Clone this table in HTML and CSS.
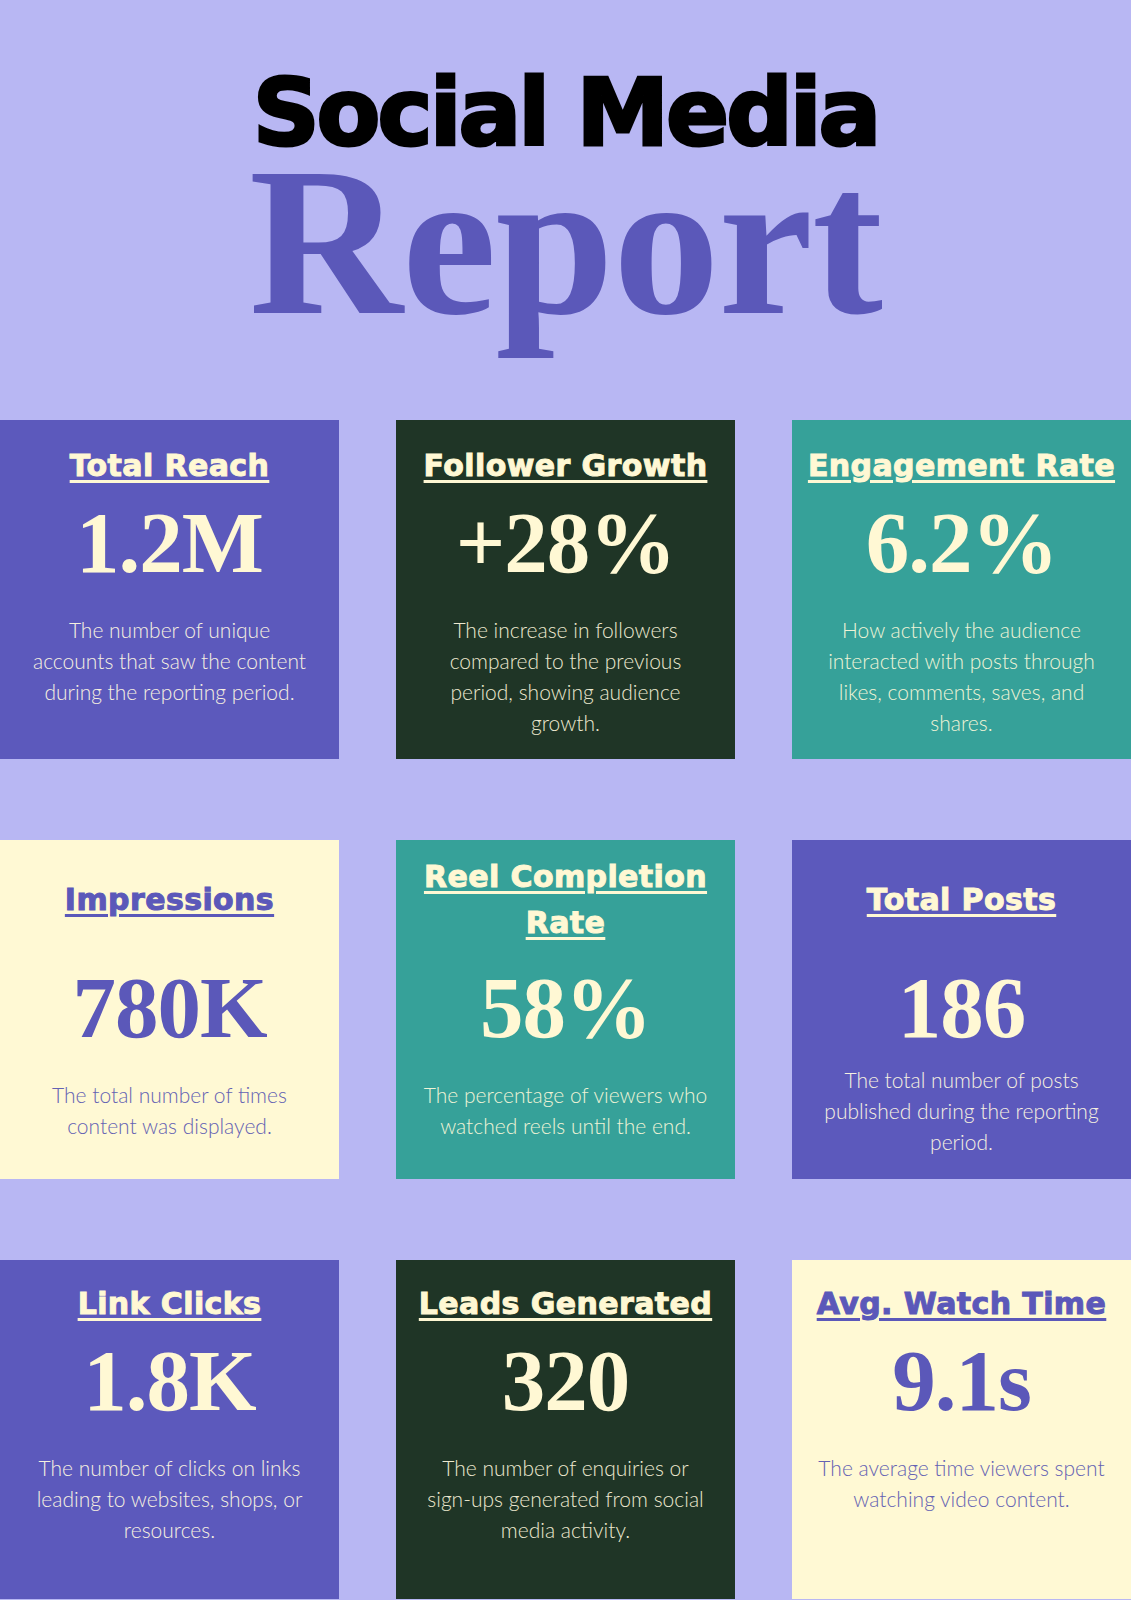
FILE: index.html
```html
<!DOCTYPE html>
<html lang="en">
<head>
<meta charset="utf-8">
<title>Social Media Report</title>
<link rel="stylesheet" href="styles.css">
</head>
<body>
<main class="page">
  <header class="masthead">
    <h1 class="title-top">Social Media</h1>
    <div class="title-main">Report</div>
  </header>

  <section class="grid">
    <article class="card card--purple">
      <h2 class="card-title">Total Reach</h2>
      <div class="card-value">1.2M</div>
      <p class="card-desc">The number of unique accounts that saw the content during the reporting period.</p>
    </article>
    <article class="card card--green">
      <h2 class="card-title">Follower Growth</h2>
      <div class="card-value">+28%</div>
      <p class="card-desc">The increase in followers compared to the previous period, showing audience growth.</p>
    </article>
    <article class="card card--teal">
      <h2 class="card-title">Engagement Rate</h2>
      <div class="card-value">6.2%</div>
      <p class="card-desc">How actively the audience interacted with posts through likes, comments, saves, and shares.</p>
    </article>

    <article class="card card--cream card--mid">
      <h2 class="card-title">Impressions</h2>
      <div class="card-value">780K</div>
      <p class="card-desc">The total number of times content was displayed.</p>
    </article>
    <article class="card card--teal card--mid">
      <h2 class="card-title">Reel Completion Rate</h2>
      <div class="card-value">58%</div>
      <p class="card-desc">The percentage of viewers who watched reels until the end.</p>
    </article>
    <article class="card card--purple card--mid">
      <h2 class="card-title">Total Posts</h2>
      <div class="card-value">186</div>
      <p class="card-desc">The total number of posts published during the reporting period.</p>
    </article>

    <article class="card card--purple card--low">
      <h2 class="card-title">Link Clicks</h2>
      <div class="card-value">1.8K</div>
      <p class="card-desc">The number of clicks on links leading to websites, shops, or resources.</p>
    </article>
    <article class="card card--green card--low">
      <h2 class="card-title">Leads Generated</h2>
      <div class="card-value">320</div>
      <p class="card-desc">The number of enquiries or sign-ups generated from social media activity.</p>
    </article>
    <article class="card card--cream card--low">
      <h2 class="card-title">Avg. Watch Time</h2>
      <div class="card-value">9.1s</div>
      <p class="card-desc">The average time viewers spent watching video content.</p>
    </article>
  </section>
</main>
</body>
</html>
```
FILE: styles.css
```css
* {
  box-sizing: border-box;
}

html, body {
  margin: 0;
  padding: 0;
}

body {
  background: #b8b7f3;
  font-family: "Lato", "Liberation Sans", sans-serif;
}

.page {
  width: 1131px;
  height: 1600px;
  overflow: hidden;
}

.masthead {
  padding: 73px 0 99px;
  text-align: center;
}

.title-top {
  margin: 0;
  font-family: "DejaVu Sans", "Liberation Sans", sans-serif;
  font-weight: 700;
  font-size: 93px;
  line-height: 80px;
  letter-spacing: -3px;
  color: #000;
  -webkit-text-stroke: 3px #000;
}

.title-main {
  margin-top: 8px;
  font-family: "Liberation Serif", "DejaVu Serif", serif;
  font-weight: 700;
  font-size: 213px;
  line-height: 160px;
  letter-spacing: -1px;
  color: #5b58b9;
}

.grid {
  display: grid;
  grid-template-columns: repeat(3, 339px);
  grid-auto-rows: 339px;
  column-gap: 57px;
  row-gap: 81px;
}

.card {
  display: flex;
  flex-direction: column;
  align-items: center;
  text-align: center;
  padding: 23px 14px 0;
  color: #fff8d4;
}

.card--purple { background: #5c59bc; }
.card--green { background: #1f3526; }
.card--teal { background: #36a199; }
.card--cream { background: #fff9d4; color: #5b58b9; }

.card-title {
  margin: 0;
  font-family: "DejaVu Sans", "Liberation Sans", sans-serif;
  font-weight: 700;
  font-size: 30px;
  line-height: 46px;
  letter-spacing: 0.4px;
  -webkit-text-stroke: 1px currentColor;
  text-decoration: underline;
  text-decoration-thickness: 3px;
  text-underline-offset: 4px;
}

.card-value {
  margin-top: 6px;
  font-family: "Liberation Serif", "DejaVu Serif", serif;
  font-weight: 700;
  font-size: 87px;
  line-height: 96px;
  letter-spacing: -1px;
}

.card-desc {
  margin: 23px 0 0;
  padding: 0 12px;
  font-family: "Lato", "Liberation Sans", sans-serif;
  font-weight: 300;
  font-size: 21px;
  line-height: 31px;
  color: #f6f0e0;
}

.card--green .card-desc { color: #ece8cf; }
.card--teal .card-desc { color: #eef3d6; }
.card--cream .card-desc { color: #6462b3; }

.card--low {
  padding-top: 21px;
}

/* middle row: two-line heading slot, centred description slot */
.card--mid {
  padding: 14px 14px 15px;
}

.card--mid .card-title {
  min-height: 92px;
  display: flex;
  align-items: center;
  justify-content: center;
}

.card--mid .card-value {
  margin-top: 14px;
}

.card--mid .card-desc {
  margin-top: 0;
  flex: 1;
  display: flex;
  align-items: center;
  justify-content: center;
}
```
